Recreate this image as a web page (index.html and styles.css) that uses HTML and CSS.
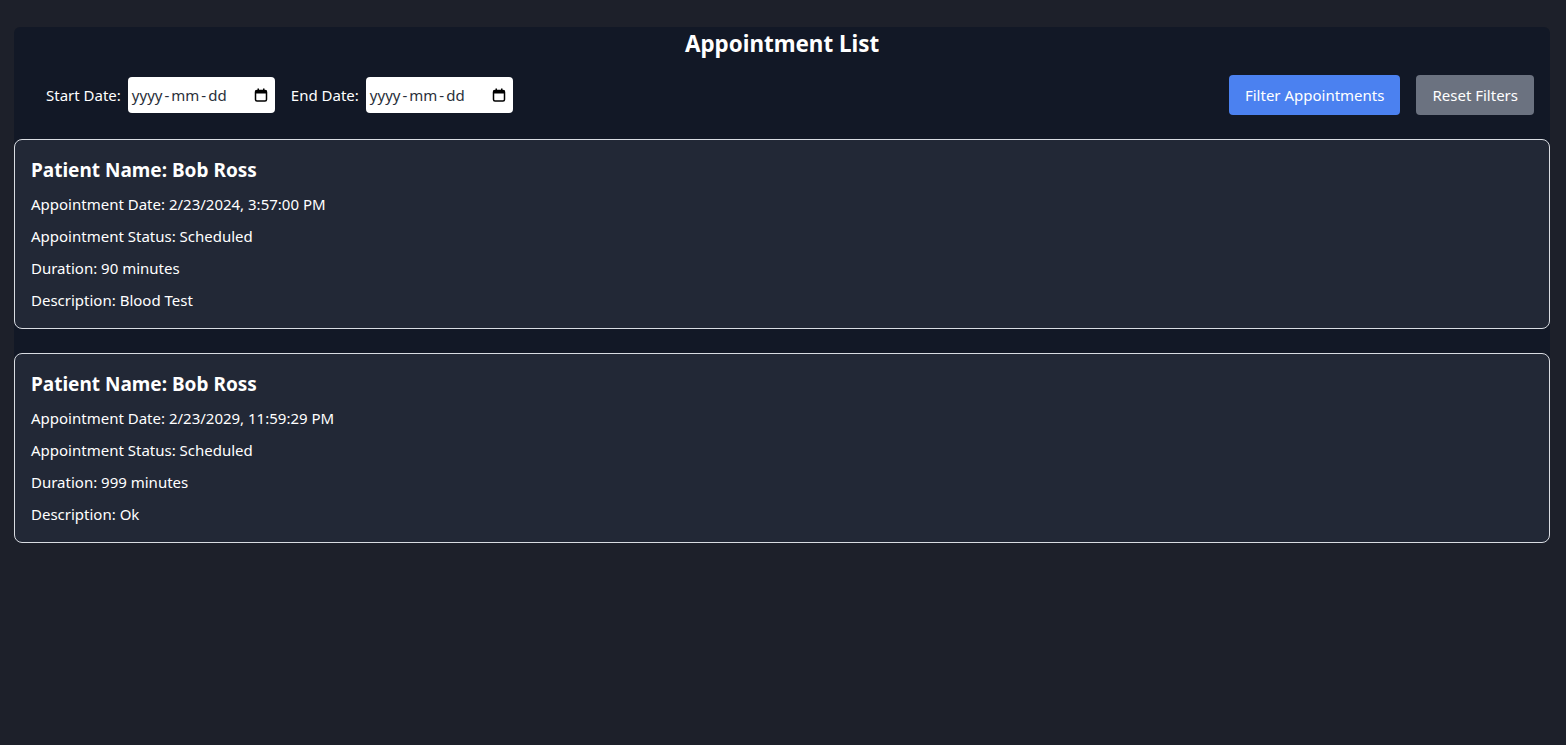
FILE: index.html
```html
<!DOCTYPE html>
<html lang="en">
<head>
<meta charset="utf-8">
<title>Appointment List</title>
<link rel="stylesheet" href="styles.css">
</head>
<body>
<main class="panel">
  <h1 class="title">Appointment List</h1>
  <div class="filters">
    <div class="dates">
      <label class="field">
        <span class="field-label">Start Date:</span>
        <span class="date-input">
          <span class="date-text">yyyy<span class="sep">-</span>mm<span class="sep">-</span>dd</span>
          <svg class="cal" width="14" height="14" viewBox="0 0 14 14" aria-hidden="true">
            <rect x="1.5" y="2.5" width="11" height="10.5" rx="1.5" fill="none" stroke="#000" stroke-width="1.5"/>
            <rect x="1.5" y="2.5" width="11" height="3" fill="#000"/>
            <rect x="3.5" y="0.5" width="1.5" height="3" fill="#000"/>
            <rect x="9" y="0.5" width="1.5" height="3" fill="#000"/>
          </svg>
        </span>
      </label>
      <label class="field">
        <span class="field-label">End Date:</span>
        <span class="date-input">
          <span class="date-text">yyyy<span class="sep">-</span>mm<span class="sep">-</span>dd</span>
          <svg class="cal" width="14" height="14" viewBox="0 0 14 14" aria-hidden="true">
            <rect x="1.5" y="2.5" width="11" height="10.5" rx="1.5" fill="none" stroke="#000" stroke-width="1.5"/>
            <rect x="1.5" y="2.5" width="11" height="3" fill="#000"/>
            <rect x="3.5" y="0.5" width="1.5" height="3" fill="#000"/>
            <rect x="9" y="0.5" width="1.5" height="3" fill="#000"/>
          </svg>
        </span>
      </label>
    </div>
    <div class="actions">
      <button class="btn btn-primary">Filter Appointments</button>
      <button class="btn btn-secondary">Reset Filters</button>
    </div>
  </div>

  <section class="card">
    <h2 class="card-title">Patient Name: Bob Ross</h2>
    <p class="card-line">Appointment Date: 2/23/2024, 3:57:00 PM</p>
    <p class="card-line">Appointment Status: Scheduled</p>
    <p class="card-line">Duration: 90 minutes</p>
    <p class="card-line">Description: Blood Test</p>
  </section>

  <section class="card">
    <h2 class="card-title">Patient Name: Bob Ross</h2>
    <p class="card-line">Appointment Date: 2/23/2029, 11:59:29 PM</p>
    <p class="card-line">Appointment Status: Scheduled</p>
    <p class="card-line">Duration: 999 minutes</p>
    <p class="card-line">Description: Ok</p>
  </section>
</main>
</body>
</html>
```

FILE: styles.css
```css
* { box-sizing: border-box; }

html, body {
  margin: 0;
  padding: 0;
}

body {
  background: #1d202a;
  color: #ffffff;
  font-family: "Noto Sans", "Open Sans", sans-serif;
  font-size: 15px;
  padding: 27px 16px 0 14px;
  min-height: 745px;
}

.panel {
  background: #121826;
  border-radius: 6px;
  height: 340px;
  padding-top: 1px;
}

.title {
  margin: 0 0 15px;
  text-align: center;
  font-size: 22.4px;
  line-height: 32px;
  font-weight: 700;
}

.filters {
  display: flex;
  align-items: center;
  justify-content: space-between;
  height: 40px;
  margin-bottom: 24px;
  padding: 0 16px 0 32px;
}

.dates {
  display: flex;
  align-items: center;
  gap: 16px;
}

.field {
  display: flex;
  align-items: center;
  gap: 7px;
}

.field-label {
  font-size: 15px;
}

.date-input {
  display: flex;
  align-items: center;
  justify-content: space-between;
  width: 147px;
  height: 36px;
  background: #ffffff;
  border-radius: 4px;
  padding: 0 7px 0 4px;
  color: #2a2f3a;
}

.date-text {
  font-size: 15px;
}

.sep {
  margin: 0 2px;
}

.actions {
  display: flex;
  gap: 16px;
}

.btn {
  height: 40px;
  border: 0;
  border-radius: 4px;
  padding: 0 16px;
  color: #ffffff;
  font-family: inherit;
  font-size: 15px;
}

.btn-primary { background: #4b81f0; }
.btn-secondary { background: #6b7280; }

.card {
  background: #222836;
  border: 1px solid #d9dce2;
  border-radius: 8px;
  padding: 16px;
  margin-bottom: 24px;
}

.card-title {
  margin: 0 0 8px;
  font-size: 19px;
  line-height: 28px;
  font-weight: 700;
}

.card-line {
  margin: 0 0 8px;
  font-size: 15px;
  line-height: 24px;
}

.card-line:last-child { margin-bottom: 0; }
```
